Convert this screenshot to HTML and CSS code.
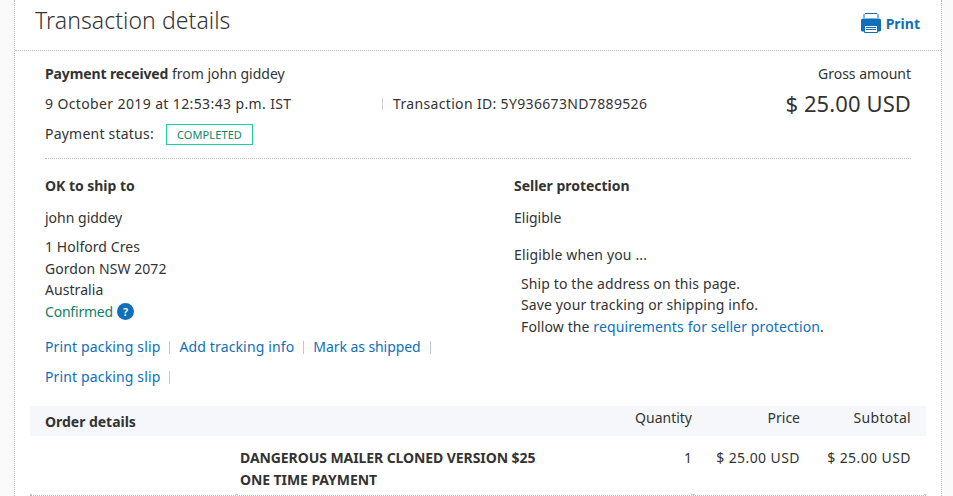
FILE: index.html
```html
<!DOCTYPE html>
<html lang="en">
<head>
    <meta charset="UTF-8">
    <meta name="viewport" content="width=device-width, initial-scale=1.0">
    <title>Transaction details</title>
    <link rel="stylesheet" href="styles.css">
</head>
<body>
    <div class="panel">
        <div class="panel-header">
            <h1>Transaction details</h1>
            <a href="#" class="print-link">
                <svg class="print-icon" width="20" height="20" viewBox="0 0 20 20">
                    <path d="M3 5V1.500l1-1h12l1 1V5" fill="#fff" stroke="#0f6fb8"/>
                    <path d="M2 5.500h16a2 2 0 0 1 2 2V17a1.500 1.500 0 0 1-1.500 1.500h-17A1.500 1.500 0 0 1 0 17V7.500a2 2 0 0 1 2-2z" fill="#0f6fb8"/>
                    <path d="M3.500 12.500h13v7h-13z" fill="#fff" stroke="#0f6fb8"/>
                    <path d="M5 14.500h10M5 16.500h10" stroke="#0f6fb8"/>
                </svg>
                <span>Print</span>
            </a>
        </div>

        <div class="summary">
            <div class="summary-info">
                <p class="payer"><strong>Payment received</strong> from john giddey</p>
                <div class="date-row">
                    <span class="date">9 October 2019 at 12:53:43 p.m. IST</span>
                    <span class="transaction-id">Transaction ID: 5Y936673ND7889526</span>
                </div>
                <div class="status-row">
                    <span class="status-label">Payment status:</span>
                    <span class="status">COMPLETED</span>
                </div>
            </div>
            <div class="gross">
                <p class="gross-label">Gross amount</p>
                <p class="gross-amount">$ 25.00 USD</p>
            </div>
        </div>

        <div class="details">
            <div class="shipping">
                <h2>OK to ship to</h2>
                <p class="ship-name">john giddey</p>
                <div class="address">
                    <p>1 Holford Cres</p>
                    <p>Gordon NSW 2072</p>
                    <p>Australia</p>
                    <p class="confirmed"><span>Confirmed</span> <a href="#" class="help">?</a></p>
                </div>
                <div class="actions">
                    <a href="#">Print packing slip</a>
                    <a href="#">Add tracking info</a>
                    <a href="#" class="shipped">Mark as shipped</a>
                </div>
                <div class="actions">
                    <a href="#">Print packing slip</a>
                </div>
            </div>
            <div class="protection">
                <h2>Seller protection</h2>
                <p class="eligible">Eligible</p>
                <p class="eligible-when">Eligible when you ...</p>
                <ul>
                    <li>Ship to the address on this page.</li>
                    <li>Save your tracking or shipping info.</li>
                    <li>Follow the <a href="#">requirements for seller protection</a>.</li>
                </ul>
            </div>
        </div>

        <div class="order">
            <div class="order-row order-head">
                <h2 class="order-title">Order details</h2>
                <span>Quantity</span>
                <span>Price</span>
                <span class="subtotal">Subtotal</span>
            </div>
            <div class="order-row order-item">
                <strong class="item-name">DANGEROUS MAILER CLONED VERSION $25<br>ONE TIME PAYMENT</strong>
                <span>1</span>
                <span class="amount">$ 25.00 USD</span>
                <span class="amount">$ 25.00 USD</span>
            </div>
        </div>
    </div>
</body>
</html>
```

FILE: styles.css
```css
* {
    box-sizing: border-box;
}

body {
    margin: 0;
    background-color: #fafafa;
    color: #333;
    font-family: "Noto Sans", sans-serif;
    font-size: 14px;
    line-height: 22px;
    overflow: hidden;
}

h1, h2, p, ul {
    margin: 0;
    padding: 0;
}

h2 {
    font-size: 14px;
    font-weight: 700;
    letter-spacing: -0.03px;
}

ul {
    list-style: none;
}

a {
    color: #0f6fb8;
    text-decoration: none;
}

.panel {
    width: 928px;
    height: 496px;
    margin-left: 14px;
    background-color: #fff;
    border-left: 1px dotted #bbb;
    border-right: 1px dotted #bbb;
    white-space: nowrap;
}

.panel-header {
    display: flex;
    justify-content: space-between;
    height: 51px;
    padding: 4px 21px 0 20px;
    border-bottom: 1px dotted #bbb;
}

h1 {
    font-size: 23px;
    font-weight: 300;
    line-height: 33px;
    letter-spacing: 0.06px;
}

.print-link {
    display: flex;
    gap: 5px;
    padding-top: 9px;
    font-weight: 700;
}

.print-icon {
    display: block;
}

.summary {
    display: flex;
    justify-content: space-between;
    height: 108px;
    margin: 0 30px;
    padding-top: 12px;
    border-bottom: 1px dotted #bbb;
}

.payer {
    margin-bottom: 8px;
}

.payer strong {
    letter-spacing: -0.12px;
}

.date-row {
    display: flex;
    align-items: center;
    margin-bottom: 8px;
}

.date {
    width: 337px;
    letter-spacing: 0.38px;
}

.transaction-id {
    padding-left: 10px;
    border-left: 1px solid #ccc;
    line-height: 12px;
    letter-spacing: 0.34px;
}

.status-row {
    display: flex;
    align-items: center;
}

.status-label {
    width: 121px;
    letter-spacing: 0.22px;
}

.status {
    width: 87px;
    height: 21px;
    border: 1px solid #1fcf94;
    color: #0e8268;
    font-size: 11px;
    line-height: 19px;
    letter-spacing: 0.1px;
    text-align: center;
}

.gross {
    text-align: right;
}

.gross-amount {
    margin-top: 5px;
    font-size: 22px;
    line-height: 26px;
    letter-spacing: 0.1px;
}

.details {
    display: grid;
    grid-template-columns: 469px 1fr;
    height: 247px;
    padding: 16px 30px 0;
}

.ship-name,
.eligible {
    margin-top: 10px;
}

.address {
    margin-top: 7px;
    line-height: 21.6px;
    letter-spacing: 0.06px;
}

.confirmed {
    display: flex;
    align-items: center;
    gap: 4px;
    color: #0e8268;
    letter-spacing: -0.2px;
}

.help {
    width: 17px;
    height: 17px;
    border-radius: 50%;
    background-color: #0f6fb8;
    color: #fff;
    font-size: 11px;
    font-weight: 600;
    line-height: 17px;
    text-align: center;
}

.actions {
    display: flex;
    margin-top: 8px;
    letter-spacing: 0.14px;
}

.address + .actions {
    margin-top: 14px;
}

.actions a {
    display: flex;
    align-items: center;
}

.actions .shipped {
    letter-spacing: -0.07px;
}

.actions a::after {
    content: "";
    width: 1px;
    height: 13px;
    margin: 0 9px;
    background-color: #bcc8d3;
}

.eligible-when {
    margin-top: 15px;
    letter-spacing: 0.15px;
}

.protection ul {
    margin-top: 7px;
    padding-left: 7px;
    line-height: 21.4px;
    letter-spacing: 0.12px;
}

.order {
    margin: 0 15px;
}

.order-row {
    display: grid;
    grid-template-columns: 570px 92px 108px 111px;
    padding-right: 15px;
    text-align: right;
}

.order-head {
    height: 30px;
    padding-top: 1px;
    background-color: #f5f7fa;
}

.order-title {
    padding: 4px 0 0 15px;
    text-align: left;
}

.subtotal {
    letter-spacing: 0.3px;
}

/* small ticks where the cell borders meet */
.order-item {
    height: 60px;
    padding-top: 11px;
    border-bottom: 1px dotted #bbb;
    background-image: linear-gradient(#ccc, #ccc), linear-gradient(#ccc, #ccc), linear-gradient(#ccc, #ccc), linear-gradient(#ccc, #ccc);
    background-position: 0 100%, 205px 100%, 661px 100%, 100% 100%;
    background-size: 2px 1px, 3px 1px, 4px 1px, 2px 1px;
    background-repeat: no-repeat;
    background-origin: padding-box;
}

.item-name {
    padding-left: 210px;
    letter-spacing: -0.08px;
    text-align: left;
}

.amount {
    letter-spacing: 0.42px;
}
```
